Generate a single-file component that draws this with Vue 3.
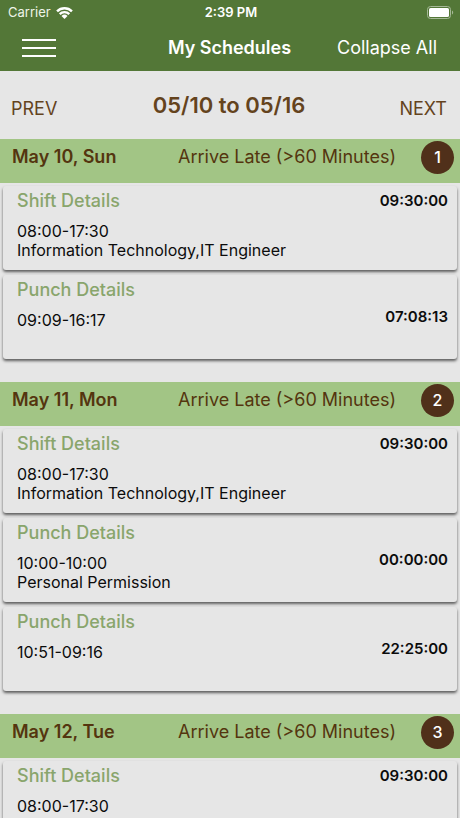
<script setup>
import { ref } from 'vue'

const shift = {
  title: 'Shift Details',
  lines: ['08:00-17:30', 'Information Technology,IT Engineer'],
  total: '09:30:00',
  kind: 'shift',
}

const days = [
  {
    date: 'May 10, Sun',
    status: 'Arrive Late (>60 Minutes)',
    count: 1,
    cards: [
      shift,
      { title: 'Punch Details', lines: ['09:09-16:17'], total: '07:08:13', kind: 'punch' },
    ],
  },
  {
    date: 'May 11, Mon',
    status: 'Arrive Late (>60 Minutes)',
    count: 2,
    cards: [
      shift,
      { title: 'Punch Details', lines: ['10:00-10:00', 'Personal Permission'], total: '00:00:00', kind: 'punch' },
      { title: 'Punch Details', lines: ['10:51-09:16'], total: '22:25:00', kind: 'punch' },
    ],
  },
  {
    date: 'May 12, Tue',
    status: 'Arrive Late (>60 Minutes)',
    count: 3,
    cards: [{ title: 'Shift Details', lines: ['08:00-17:30'], total: '09:30:00', kind: 'shift' }],
  },
]

const expanded = ref(true)
</script>

<template>
  <div class="screen">
    <header class="top">
      <div class="status-bar">
        <span class="carrier">
          Carrier
          <svg class="wifi" viewBox="0 0 16 12" aria-hidden="true">
            <path d="M0.2 4.1a11.2 11.2 0 0 1 15.6 0L14.2 5.8a8.9 8.9 0 0 0-12.4 0Z" />
            <path d="M2.7 6.7a7.6 7.6 0 0 1 10.6 0L11.7 8.3a5.3 5.3 0 0 0-7.4 0Z" />
            <path d="M5.2 9.2a4 4 0 0 1 5.6 0L8 12Z" />
          </svg>
        </span>
        <span class="clock">2:39 PM</span>
        <svg class="battery" viewBox="0 0 27 13" aria-hidden="true">
          <rect class="shell" x="0.5" y="0.5" width="23" height="12" rx="3" />
          <rect x="2" y="2" width="20" height="9" rx="1.6" />
          <path class="tip" d="M25 4.5c1.6.6 1.6 3.4 0 4Z" />
        </svg>
      </div>
      <div class="title-bar">
        <button class="menu" type="button" aria-label="Menu">
          <span></span><span></span><span></span>
        </button>
        <h1>My Schedules</h1>
        <button class="collapse" type="button" @click="expanded = !expanded">Collapse All</button>
      </div>
    </header>

    <nav class="range">
      <button type="button">PREV</button>
      <h2>05/10 to 05/16</h2>
      <button type="button">NEXT</button>
    </nav>

    <main class="days">
      <section v-for="day in days" :key="day.date" class="day">
        <div class="day-head">
          <h3>{{ day.date }}</h3>
          <span class="day-status">{{ day.status }}</span>
          <span class="count">{{ day.count }}</span>
        </div>
        <div v-if="expanded" class="cards">
          <article v-for="(card, i) in day.cards" :key="i" class="card" :class="card.kind">
            <div class="info">
              <h4>{{ card.title }}</h4>
              <p v-for="line in card.lines" :key="line">{{ line }}</p>
            </div>
            <span class="total">{{ card.total }}</span>
          </article>
        </div>
      </section>
    </main>
  </div>
</template>

<style>
body {
  background: #e6e6e6;
}
</style>

<style scoped>
.screen {
  display: flex;
  flex-direction: column;
  height: 100vh;
  overflow: hidden;
  background: #e6e6e6;
  color: #0c0c0c;
  font-family: Inter, Roboto, sans-serif;
}

h1, h2, h3, h4, p {
  margin: 0;
}

button {
  padding: 0;
  border: 0;
  background: none;
  color: inherit;
  font: inherit;
  cursor: pointer;
}

.top {
  flex: none;
  background: #537737;
  color: #fff;
}

.status-bar {
  display: grid;
  grid-template-columns: 1fr auto 1fr;
  align-items: center;
  height: 24px;
  padding: 0 6px 0 8px;
  font-size: 13px;
}

.carrier {
  display: flex;
  align-items: center;
  gap: 5px;
  color: #eef4e8;
}

.wifi {
  width: 17px;
  height: 13px;
  fill: #fff;
}

.clock {
  font-weight: 600;
}

.battery {
  justify-self: end;
  width: 27px;
  height: 13px;
  fill: #fff;
}

.battery .shell {
  fill: none;
  stroke: #a5b896;
}

.battery .tip {
  fill: #a5b896;
}

.title-bar {
  display: grid;
  grid-template-columns: 1fr auto 1fr;
  align-items: center;
  height: 47px;
  padding: 0 23px 0 22px;
  font-size: 18px;
}

.menu {
  display: flex;
  flex-direction: column;
  justify-self: start;
  gap: 6px;
  width: 34px;
}

.menu span {
  height: 2px;
  background: #fff;
}

h1 {
  font-size: 18px;
  font-weight: 600;
}

.collapse {
  justify-self: end;
}

.range {
  flex: none;
  display: grid;
  grid-template-columns: 1fr auto 1fr;
  align-items: center;
  height: 68px;
  padding: 0 13px 0 11px;
  color: #64431d;
  font-size: 18px;
}

.range button {
  justify-self: start;
  padding-top: 6px;
}

.range button:last-child {
  justify-self: end;
}

.range h2 {
  font-size: 22px;
  font-weight: 600;
}

.days {
  flex: 1;
  min-height: 0;
  overflow-y: auto;
  scrollbar-width: none;
}

.day {
  margin-bottom: 23px;
}

.day-head {
  display: flex;
  align-items: flex-start;
  height: 44px;
  padding: 0 6px 0 12px;
  background: #a2c585;
  color: #54350f;
  font-size: 18px;
  line-height: 35px;
}

h3 {
  font-size: 18px;
  font-weight: 600;
}

.day-status {
  margin-left: auto;
  margin-right: 25px;
}

.count {
  width: 33px;
  height: 33px;
  margin-top: 2px;
  border-radius: 50%;
  background: #50301a;
  color: #fff;
  font-size: 16px;
  font-weight: 500;
  line-height: 33px;
  text-align: center;
}

.cards {
  display: grid;
  gap: 5px;
  padding: 3px 3px 0;
}

.card {
  display: flex;
  justify-content: space-between;
  height: 84px;
  padding: 0 9px 0 14px;
  border-radius: 3px;
  background: #e6e6e6;
  box-shadow: 0 2px 3px rgba(0, 0, 0, 0.6);
}

.info {
  font-size: 16px;
  line-height: 19px;
}

h4 {
  margin-bottom: 6px;
  color: #89a56c;
  font-size: 18px;
  font-weight: 500;
  line-height: 30px;
}

.total {
  font-size: 15px;
  font-weight: 600;
  line-height: 30px;
}

.punch .total {
  align-self: center;
}
</style>
